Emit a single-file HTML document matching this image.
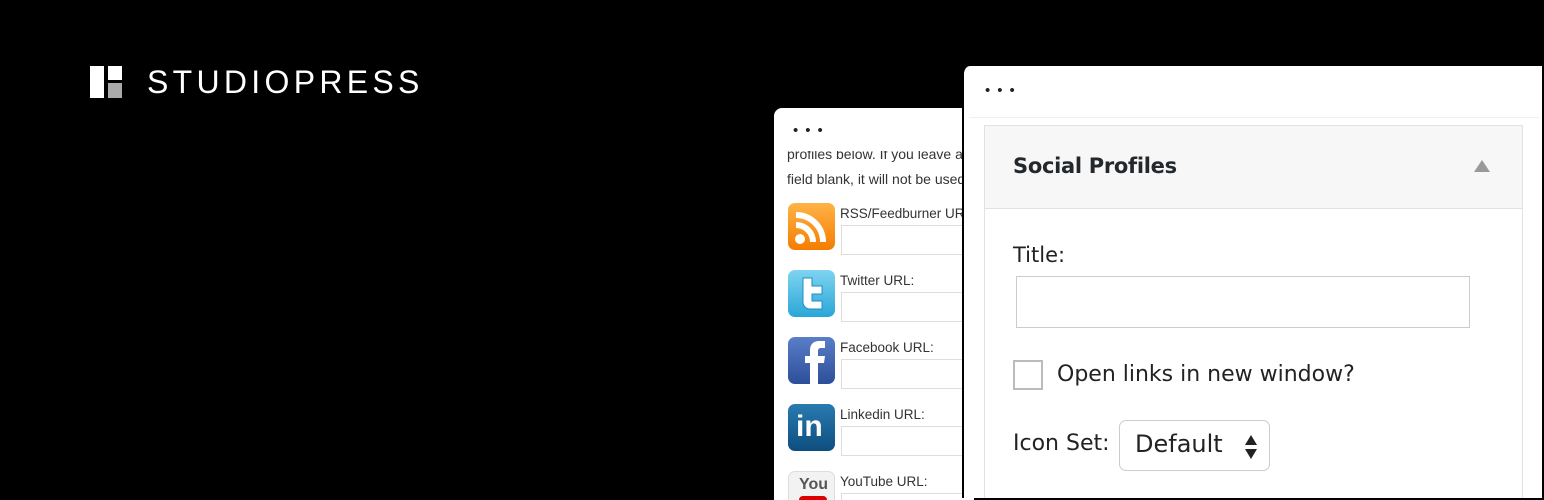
<!DOCTYPE html>
<html><head><meta charset="utf-8"><style>
*{box-sizing:border-box;margin:0;padding:0}
html,body{width:1544px;height:500px;overflow:hidden}
body{background:#000;position:relative;font-family:"Liberation Sans",sans-serif}
.abs{position:absolute}
.dots{position:absolute;font-size:15px;letter-spacing:7px;color:#222;line-height:10px}
.back{left:774px;top:108px;width:200px;height:392px;background:#fff;border-radius:8px 0 0 0;overflow:hidden}
.back .t{position:absolute;left:13px;font-size:14px;color:#333;white-space:nowrap}
.back .l{position:absolute;left:66px;font-size:13.5px;color:#333;white-space:nowrap}
.back .in{position:absolute;left:67px;width:140px;height:30px;border:1px solid #ddd}
.ic{position:absolute;left:14px;width:47px;height:47px;border-radius:7px;overflow:hidden}
.front{left:962px;top:66px;width:580px;height:432px;background:#fff;border-radius:8px 0 0 0;border-left:2px solid #000;overflow:hidden}
.w{position:absolute;left:20px;top:59px;width:539px;height:380px;border:1px solid #e2e2e2}
.hd{height:83px;background:#f7f7f7;border-bottom:1px solid #e2e2e2;position:relative}
.f{font-family:"DejaVu Sans","Liberation Sans",sans-serif;color:#222;position:absolute;white-space:nowrap}
</style></head><body>
<div class="abs" style="left:90px;top:66px;width:14px;height:32px;background:#fff"></div>
<div class="abs" style="left:108px;top:66px;width:14px;height:14px;background:#fff"></div>
<div class="abs" style="left:108px;top:83px;width:14px;height:15px;background:#aaa"></div>
<div class="abs" style="left:147px;top:64px;color:#fff;font-size:32px;letter-spacing:4.3px;line-height:36px">STUDIOPRESS</div>

<div class="abs back">
<div class="dots" style="left:19px;top:18px">•••</div>
<div class="t" style="top:43px;height:12px;overflow:hidden;line-height:6px">profiles below. If you leave a</div>
<div class="t" style="top:63px">field blank, it will not be used</div>
<div class="ic" style="top:95px;background:linear-gradient(#ffb347,#f57c00)"><svg width="47" height="47"><circle cx="12" cy="36" r="5" fill="#fff"/><path d="M8 22a17 17 0 0 1 17 17M8 12a27 27 0 0 1 27 27" stroke="#fff" stroke-width="6" fill="none"/></svg></div>
<div class="l" style="top:98px">RSS/Feedburner URL</div><div class="in" style="top:117px"></div>
<div class="ic" style="top:162px;background:linear-gradient(#7fd4f0,#2aa6d8)"><svg width="47" height="47"><path d="M15 8v24a7 7 0 0 0 7 7h12v-8H24v-7h10v-8H24V8z" fill="#fff" stroke="#1b8fc0" stroke-width="1"/></svg></div>
<div class="l" style="top:165px">Twitter URL:</div><div class="in" style="top:184px"></div>
<div class="ic" style="top:229px;background:linear-gradient(#5a7ec8,#2d4f9a)"><svg width="47" height="47"><path d="M22 47V26h-5v-7h5v-6c0-6 4-9 9-9h6v7h-4c-2 0-3 1-3 3v5h7l-1 7h-6v21z" fill="#fff"/></svg></div>
<div class="l" style="top:232px">Facebook URL:</div><div class="in" style="top:251px"></div>
<div class="ic" style="top:296px;background:linear-gradient(#2a7ab0,#0d4e7e)"><div style="position:absolute;left:8px;top:6px;color:#fff;font-weight:bold;font-size:30px">in</div></div>
<div class="l" style="top:299px">Linkedin URL:</div><div class="in" style="top:318px"></div>
<div class="ic" style="top:363px;background:#f2f2f2;border:1px solid #ddd"><div style="position:absolute;left:10px;top:4px;color:#555;font-weight:bold;font-size:16px">You</div><div style="position:absolute;left:10px;top:24px;width:28px;height:20px;background:#d00;border-radius:4px"></div></div>
<div class="l" style="top:366px">YouTube URL:</div><div class="in" style="top:385px"></div>
</div>

<div class="abs front">
<div class="dots" style="left:21px;top:20px">•••</div>
<div class="abs" style="left:5px;top:51px;width:570px;height:1px;background:#f0f0f0"></div>
<div class="w">
<div class="hd"><div class="f" style="left:28px;top:28px;font-size:21px;font-weight:bold;color:#23282d;letter-spacing:-0.3px">Social Profiles</div>
<svg class="abs" style="left:489px;top:34px" width="16" height="12"><path d="M0 12L8 0L16 12z" fill="#999"/></svg></div>
<div class="f" style="left:28px;top:117px;font-size:21px">Title:</div>
<div class="abs" style="left:31px;top:150px;width:454px;height:52px;border:1px solid #ccc"></div>
<div class="abs" style="left:28px;top:234px;width:30px;height:30px;border:2px solid #bbb"></div>
<div class="f" style="left:72px;top:236px;font-size:22px">Open links in new window?</div>
<div class="f" style="left:28px;top:305px;font-size:22px">Icon Set:</div>
<div class="abs" style="left:134px;top:294px;width:151px;height:51px;border:1px solid #ccc;border-radius:7px"></div>
<div class="f" style="left:150px;top:304px;font-size:24px">Default</div>
<svg class="abs" style="left:259px;top:309px" width="14" height="24"><path d="M1 10L7 0L13 10zM1 14L7 24L13 14z" fill="#222"/></svg>
</div>
</div>
</body></html>
